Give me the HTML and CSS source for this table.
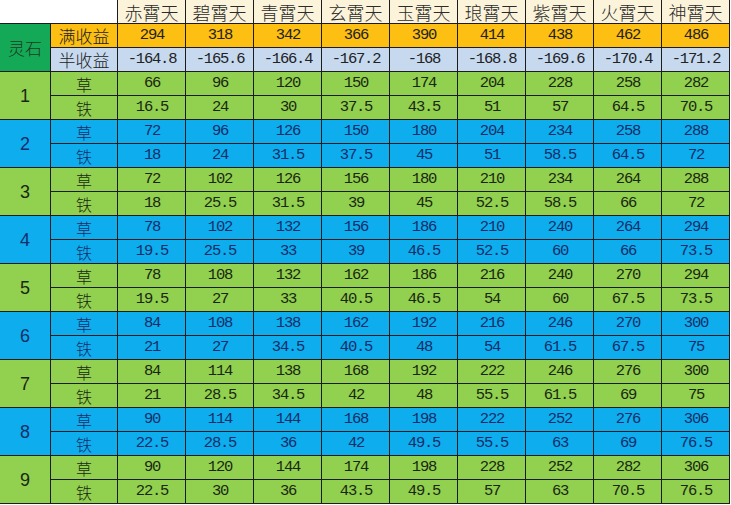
FILE: index.html
```html
<!DOCTYPE html>
<html lang="zh-CN">
<head>
<meta charset="utf-8">
<title>灵石收益表</title>
<link rel="stylesheet" href="styles.css">
</head>
<body>
<div class="sheet">
  <div class="c blank span2"></div>
  <div class="c hd">赤霄天</div><div class="c hd">碧霄天</div><div class="c hd">青霄天</div><div class="c hd">玄霄天</div><div class="c hd">玉霄天</div><div class="c hd">琅霄天</div><div class="c hd">紫霄天</div><div class="c hd">火霄天</div><div class="c hd">神霄天</div>

  <div class="c ls rows2">灵石</div>
  <div class="c or lab">满收益</div>
  <div class="c or n">294</div><div class="c or n">318</div><div class="c or n">342</div><div class="c or n">366</div><div class="c or n">390</div><div class="c or n">414</div><div class="c or n">438</div><div class="c or n">462</div><div class="c or n">486</div>
  <div class="c lb lab">半收益</div>
  <div class="c lb n">-164.8</div><div class="c lb n">-165.6</div><div class="c lb n">-166.4</div><div class="c lb n">-167.2</div><div class="c lb n">-168</div><div class="c lb n">-168.8</div><div class="c lb n">-169.6</div><div class="c lb n">-170.4</div><div class="c lb n">-171.2</div>

  <div class="c g rows2 idx">1</div>
  <div class="c g kind">草</div>
  <div class="c g n">66</div><div class="c g n">96</div><div class="c g n">120</div><div class="c g n">150</div><div class="c g n">174</div><div class="c g n">204</div><div class="c g n">228</div><div class="c g n">258</div><div class="c g n">282</div>
  <div class="c g kind">铁</div>
  <div class="c g n">16.5</div><div class="c g n">24</div><div class="c g n">30</div><div class="c g n">37.5</div><div class="c g n">43.5</div><div class="c g n">51</div><div class="c g n">57</div><div class="c g n">64.5</div><div class="c g n">70.5</div>

  <div class="c b rows2 idx">2</div>
  <div class="c b kind">草</div>
  <div class="c b n">72</div><div class="c b n">96</div><div class="c b n">126</div><div class="c b n">150</div><div class="c b n">180</div><div class="c b n">204</div><div class="c b n">234</div><div class="c b n">258</div><div class="c b n">288</div>
  <div class="c b kind">铁</div>
  <div class="c b n">18</div><div class="c b n">24</div><div class="c b n">31.5</div><div class="c b n">37.5</div><div class="c b n">45</div><div class="c b n">51</div><div class="c b n">58.5</div><div class="c b n">64.5</div><div class="c b n">72</div>

  <div class="c g rows2 idx">3</div>
  <div class="c g kind">草</div>
  <div class="c g n">72</div><div class="c g n">102</div><div class="c g n">126</div><div class="c g n">156</div><div class="c g n">180</div><div class="c g n">210</div><div class="c g n">234</div><div class="c g n">264</div><div class="c g n">288</div>
  <div class="c g kind">铁</div>
  <div class="c g n">18</div><div class="c g n">25.5</div><div class="c g n">31.5</div><div class="c g n">39</div><div class="c g n">45</div><div class="c g n">52.5</div><div class="c g n">58.5</div><div class="c g n">66</div><div class="c g n">72</div>

  <div class="c b rows2 idx">4</div>
  <div class="c b kind">草</div>
  <div class="c b n">78</div><div class="c b n">102</div><div class="c b n">132</div><div class="c b n">156</div><div class="c b n">186</div><div class="c b n">210</div><div class="c b n">240</div><div class="c b n">264</div><div class="c b n">294</div>
  <div class="c b kind">铁</div>
  <div class="c b n">19.5</div><div class="c b n">25.5</div><div class="c b n">33</div><div class="c b n">39</div><div class="c b n">46.5</div><div class="c b n">52.5</div><div class="c b n">60</div><div class="c b n">66</div><div class="c b n">73.5</div>

  <div class="c g rows2 idx">5</div>
  <div class="c g kind">草</div>
  <div class="c g n">78</div><div class="c g n">108</div><div class="c g n">132</div><div class="c g n">162</div><div class="c g n">186</div><div class="c g n">216</div><div class="c g n">240</div><div class="c g n">270</div><div class="c g n">294</div>
  <div class="c g kind">铁</div>
  <div class="c g n">19.5</div><div class="c g n">27</div><div class="c g n">33</div><div class="c g n">40.5</div><div class="c g n">46.5</div><div class="c g n">54</div><div class="c g n">60</div><div class="c g n">67.5</div><div class="c g n">73.5</div>

  <div class="c b rows2 idx">6</div>
  <div class="c b kind">草</div>
  <div class="c b n">84</div><div class="c b n">108</div><div class="c b n">138</div><div class="c b n">162</div><div class="c b n">192</div><div class="c b n">216</div><div class="c b n">246</div><div class="c b n">270</div><div class="c b n">300</div>
  <div class="c b kind">铁</div>
  <div class="c b n">21</div><div class="c b n">27</div><div class="c b n">34.5</div><div class="c b n">40.5</div><div class="c b n">48</div><div class="c b n">54</div><div class="c b n">61.5</div><div class="c b n">67.5</div><div class="c b n">75</div>

  <div class="c g rows2 idx">7</div>
  <div class="c g kind">草</div>
  <div class="c g n">84</div><div class="c g n">114</div><div class="c g n">138</div><div class="c g n">168</div><div class="c g n">192</div><div class="c g n">222</div><div class="c g n">246</div><div class="c g n">276</div><div class="c g n">300</div>
  <div class="c g kind">铁</div>
  <div class="c g n">21</div><div class="c g n">28.5</div><div class="c g n">34.5</div><div class="c g n">42</div><div class="c g n">48</div><div class="c g n">55.5</div><div class="c g n">61.5</div><div class="c g n">69</div><div class="c g n">75</div>

  <div class="c b rows2 idx">8</div>
  <div class="c b kind">草</div>
  <div class="c b n">90</div><div class="c b n">114</div><div class="c b n">144</div><div class="c b n">168</div><div class="c b n">198</div><div class="c b n">222</div><div class="c b n">252</div><div class="c b n">276</div><div class="c b n">306</div>
  <div class="c b kind">铁</div>
  <div class="c b n">22.5</div><div class="c b n">28.5</div><div class="c b n">36</div><div class="c b n">42</div><div class="c b n">49.5</div><div class="c b n">55.5</div><div class="c b n">63</div><div class="c b n">69</div><div class="c b n">76.5</div>

  <div class="c g rows2 idx">9</div>
  <div class="c g kind">草</div>
  <div class="c g n">90</div><div class="c g n">120</div><div class="c g n">144</div><div class="c g n">174</div><div class="c g n">198</div><div class="c g n">228</div><div class="c g n">252</div><div class="c g n">282</div><div class="c g n">306</div>
  <div class="c g kind">铁</div>
  <div class="c g n">22.5</div><div class="c g n">30</div><div class="c g n">36</div><div class="c g n">43.5</div><div class="c g n">49.5</div><div class="c g n">57</div><div class="c g n">63</div><div class="c g n">70.5</div><div class="c g n">76.5</div>
</div>
</body>
</html>
```
FILE: styles.css
```css
html, body {
  margin: 0;
  padding: 0;
  background: #ffffff;
}

.sheet {
  display: grid;
  grid-template-columns: 51px 67px repeat(9, 68px);
  grid-template-rows: repeat(21, 24px);
  width: 730px;
  font-family: "Noto Sans CJK SC", sans-serif;
  color: #222222;
}

.c {
  box-sizing: border-box;
  border-right: 1px solid #1c1c1c;
  border-bottom: 1px solid #1c1c1c;
  display: flex;
  align-items: center;
  justify-content: center;
  white-space: nowrap;
  overflow: hidden;
  font-size: 15px;
  font-weight: 300;
  line-height: 1;
}

.span2 { grid-column: span 2; }
.rows2 { grid-row: span 2; }

.blank { background: #ffffff; }
.hd { background: #fcf4da; font-size: 18px; color: #2b2b2b; }
.or { background: #fdbf12; }
.lb { background: #c6d9ef; }
.ls { background: #14a957; font-size: 17px; color: #1e3a24; }
.g { background: #92d050; color: #1a2710; }
.b { background: #0eaeee; color: #142d68; }

.lab { font-size: 17px; }
.kind { font-size: 16px; }

.n {
  font-family: "Liberation Mono", "DejaVu Sans Mono", monospace;
  font-weight: 400;
  font-size: 15.5px;
  letter-spacing: -1.2px;
  padding-left: 1px;
}

.idx {
  font-family: "Liberation Sans", sans-serif;
  font-weight: 400;
  font-size: 18px;
}
```
